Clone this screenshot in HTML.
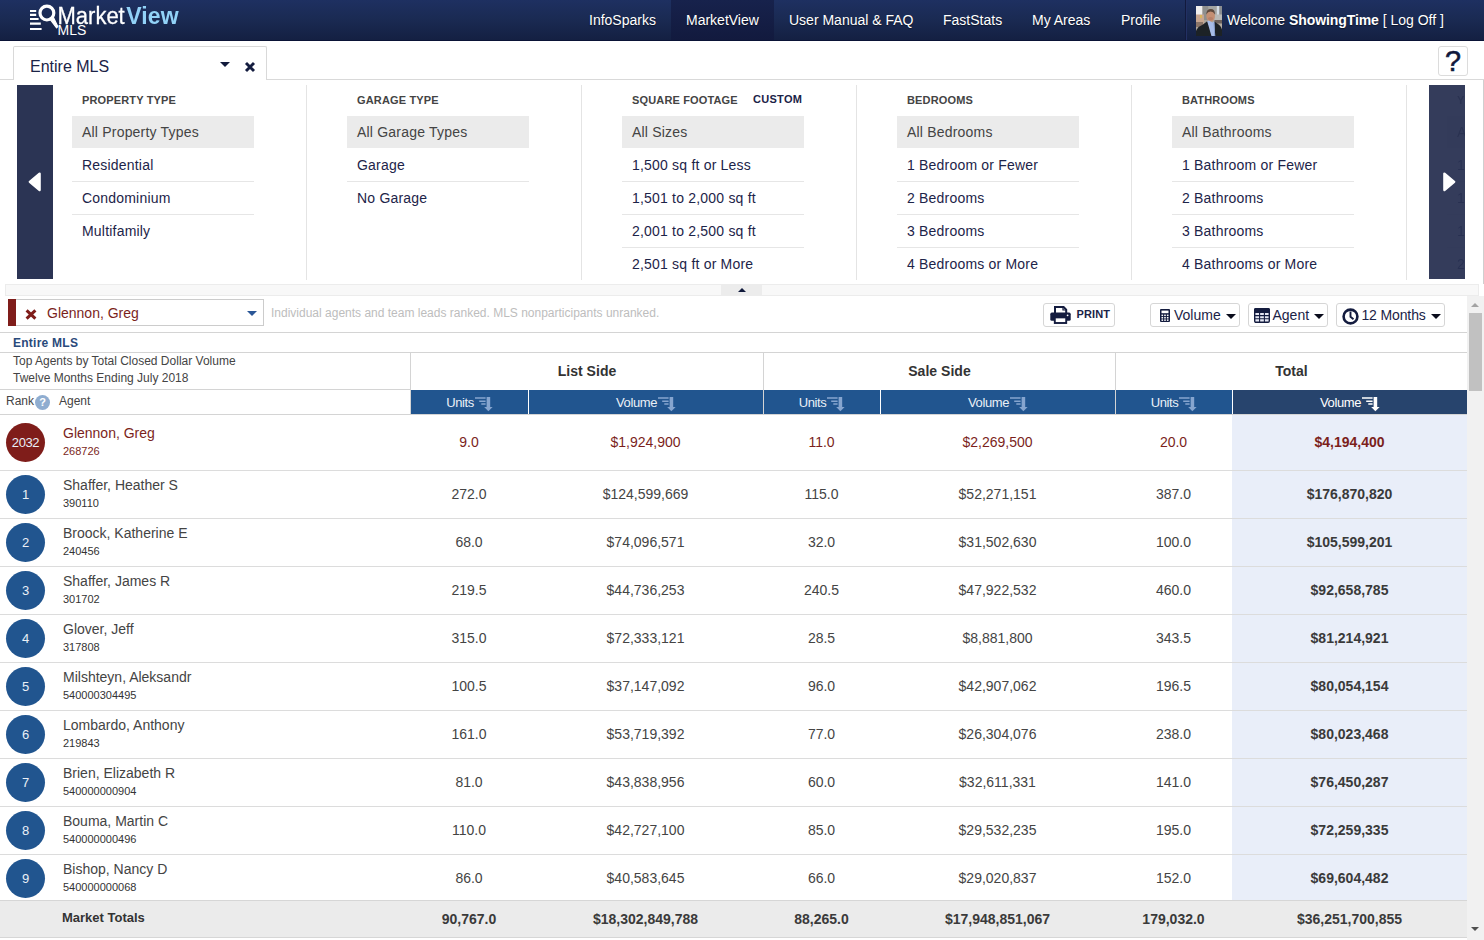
<!DOCTYPE html>
<html lang="en"><head><meta charset="utf-8"><title>MarketView MLS</title>
<style>
*{box-sizing:border-box;margin:0;padding:0}
html,body{width:1484px;height:940px;overflow:hidden;background:#fff}
body{position:relative;font-family:"Liberation Sans",Arial,sans-serif;color:#333;font-size:14px}
/* NAV */
#nav{position:absolute;left:0;top:0;width:1484px;height:41px;background:linear-gradient(#1e3061 0%,#1a2a52 50%,#142042 100%);border-bottom:1px solid #0a1336}
#nav .it{position:absolute;top:0;height:40px;line-height:40px;color:#fff;font-size:14px;white-space:nowrap;text-shadow:0 1px 1px rgba(0,0,0,.5)}
#nav .act{position:absolute;left:671px;top:0;width:103px;height:40px;background:linear-gradient(#17224c,#121a3e)}
#nav .ndiv{position:absolute;left:1185px;top:0;width:2px;height:40px;border-left:1px solid #121a3d;border-right:1px solid #223063}
#logo{position:absolute;left:0;top:0}
#logo .mk{position:absolute;left:57.5px;top:-0.4px;font-size:22px;line-height:30px;color:#fff;letter-spacing:0;white-space:nowrap;transform:scaleY(1.05);transform-origin:0 0;-webkit-text-stroke:.25px #fff}
#logo .mk b{-webkit-text-stroke:0;color:#92d2f7;font-weight:bold;letter-spacing:.1px;font-size:23px;margin-left:1.5px}
#logo .mls{position:absolute;left:57.5px;top:20.6px;font-size:14px;line-height:18px;color:#fff;white-space:nowrap}
#avatar{position:absolute;left:1196px;top:6px;width:26px;height:30px}
/* TAB BAR */
#tabbar{position:absolute;left:0;top:41px;width:1484px;height:44px}
#tabline{position:absolute;left:0;top:38px;width:1484px;height:1px;background:#d9d9d9}
#tab{position:absolute;left:13px;top:5px;width:254px;height:34px;border:1px solid #d9d9d9;border-bottom:none;background:#fff;border-radius:2px 2px 0 0}
#tab .tabname{position:absolute;left:16px;top:8px;font-size:16px;line-height:24px;color:#1b2347}
#tab .tabcaret{position:absolute;left:206px;top:15px;width:0;height:0;border-left:5px solid transparent;border-right:5px solid transparent;border-top:5px solid #111a3c}
#tab .tabx{position:absolute;left:230.4px;top:13.6px}
#help{position:absolute;left:1438px;top:5px;width:30px;height:30px;border:1px solid #dcdcdc;border-radius:3px;text-align:center;font-size:28.8px;line-height:28px;color:#10183c;-webkit-text-stroke:.55px #10183c;background:#fff}
/* FILTERS */
#filters{position:absolute;left:0;top:80px;width:1484px;height:204px;overflow:hidden}
#fright{position:absolute;left:1483px;top:0;width:1px;height:204px;background:#cfcfcf}
.arrowbox{position:absolute;top:5px;width:36px;height:194px}
#arrL{left:17px;background:#2b3454}
#arrR{left:1429px;background:rgba(39,48,81,.94)}
.fcol{position:absolute;top:0;width:182px}
.fhead{height:36px;padding:14px 0 0 10px;font-size:11px;line-height:12px;font-weight:bold;color:#444;letter-spacing:.15px;white-space:nowrap;position:relative}
.fhead .custom{position:absolute;left:131px;top:13px;color:#1b2347;letter-spacing:.3px}
.fitem{height:33px;line-height:32px;padding-left:10px;font-size:14px;color:#1d2449;border-top:1px solid #e6e6e6;white-space:nowrap;letter-spacing:.2px}
.fitem.sel{background:#ebebeb;color:#444;border-top:none;height:32px;line-height:32px}
.fitem.nb{border-top:none;padding-top:1px}
.fdiv{position:absolute;top:5px;width:1px;height:195px;background:#e4e4e4}
.ghost{opacity:.9}
/* collapse */
#collapse{position:absolute;left:5px;top:284px;width:1474px;height:12px;background:#f8f8f8;border:1px solid #ececec}
#chandle{position:absolute;left:715px;top:0;width:41px;height:10px;background:#ececec}
#chandle span{position:absolute;left:17px;top:3px;width:0;height:0;border-left:4.5px solid transparent;border-right:4.5px solid transparent;border-bottom:4.5px solid #111a3c}
/* toolbar */
#agentsel{position:absolute;left:8px;top:299px;width:256px;height:27px;border:1px solid #ccc;border-left:none;padding-left:8px;background:#fff}
#agentsel .bar{position:absolute;left:0;top:-1px;width:8px;height:27px;background:#7f1d1a}
#agentsel .x{position:absolute;left:17px;top:9px}
#agentsel .nm{position:absolute;left:39px;top:0;font-size:14px;line-height:26px;color:#7b1f1c}
#agentsel .car{position:absolute;left:238.5px;top:11px;width:0;height:0;border-left:5px solid transparent;border-right:5px solid transparent;border-top:5px solid #2b5797}
#hint{position:absolute;left:271px;top:306px;font-size:12px;line-height:15px;color:#bdbdbd;white-space:nowrap}
.btn{position:absolute;top:303px;height:24px;border:1px solid #d6d6d6;border-radius:3px;background:#fff;color:#1b2347;font-size:14px;line-height:22px;white-space:nowrap}
.btn .lab{position:absolute;top:0}
.btn .car{position:absolute;top:10px;width:0;height:0;border-left:5px solid transparent;border-right:5px solid transparent;border-top:5px solid #0a0c1c}
.btn svg{position:absolute}
#bprint .lab{font-size:11px;font-weight:bold;letter-spacing:.12px;color:#1b2347}
/* table head */
.hl{position:absolute;left:0;width:1467px;height:1px;background:#d4d4d4}
.vl{position:absolute;top:352px;width:1px;height:62px;background:#d4d4d4}
#t1{position:absolute;left:13px;top:336px;font-size:12px;line-height:15px;font-weight:bold;color:#2a4a7b;letter-spacing:.25px}
#t2,#t3{position:absolute;left:13px;font-size:12px;line-height:15px;color:#444;white-space:nowrap}
#t2{top:354px}#t3{top:371px}
#rk{position:absolute;left:6px;top:394px;font-size:12px;line-height:15px;color:#444}
#rq{position:absolute;left:35px;top:395px;width:15px;height:15px;border-radius:50%;background:#8fadd0;color:#fff;font-size:11px;font-weight:bold;line-height:15px;text-align:center}
#ag{position:absolute;left:59px;top:394px;font-size:12px;line-height:15px;color:#444}
.grp{position:absolute;top:353px;height:36px;line-height:36px;text-align:center;font-weight:bold;font-size:14px;color:#333;letter-spacing:.03px}
.ch{position:absolute;top:390px;height:24px;padding-top:1px;background:#21558f;color:#eaf0f7;font-size:13px;line-height:24px;text-align:center;letter-spacing:-.4px;white-space:nowrap}
.ch span{vertical-align:top}
.ch .si{color:#86a5cf;vertical-align:top;margin-top:6px;margin-left:1px}
.ch.act{background:#27446d;color:#fff}
.ch.act .si{color:#fff}
/* rows */
#rows{position:absolute;left:0;top:0;width:1467px;height:900px;overflow:hidden}
#hicol{position:absolute;left:1232px;top:415px;width:235px;height:500px;background:#e9eef9}
.row{position:absolute;left:0;width:1467px;border-bottom:1px solid #dcdcdc;box-sizing:content-box}
.circ{position:absolute;left:6px;top:4px;width:39px;height:39px;border-radius:50%;background:#21558f;color:#eaf0f7;font-size:13px;line-height:39px;text-align:center;letter-spacing:-.4px}
.row.me .circ{top:8px;background:#7f1d1a}
.nm{position:absolute;left:63px;top:5px;font-size:14px;line-height:18px;color:#444;white-space:nowrap}
.id{position:absolute;left:63px;top:25px;font-size:11px;line-height:14px;color:#333;white-space:nowrap}
.row.me .nm{top:9px;color:#7b1f1c}.row.me .id{top:29px;color:#7b1f1c}
.c{position:absolute;top:0;height:100%;text-align:center;font-size:14px;color:#444;white-space:nowrap;display:flex;align-items:center;justify-content:center;padding-bottom:2px;padding-right:1px}
.row.me .c{color:#7b1f1c}
.c.tv{font-weight:bold;font-size:14px;color:#3a3a3a}
.row.me .c.tv{color:#7b1f1c}
/* totals */
#totals{position:absolute;left:0;top:900px;width:1467px;height:38px;background:#ebebeb;border-top:1px solid #d6d6d6;border-bottom:1px solid #d6d6d6}
#totals .mt{position:absolute;left:62px;top:9px;font-size:13px;font-weight:bold;line-height:16px;color:#333}
#totals .c{font-weight:bold;font-size:14px;color:#3a3a3a;padding-top:0;padding-bottom:1px}
/* scrollbar */
#sb{position:absolute;left:1467px;top:296px;width:17px;height:644px;background:#f1f1f1}
#sb .sbt{position:absolute;left:2px;top:17px;width:13px;height:78px;background:#c1c1c1}
#sb .sbu{position:absolute;left:4px;top:7px;width:0;height:0;border-left:4px solid transparent;border-right:4px solid transparent;border-bottom:4px solid #a3a3a3}
#sb .sbd{position:absolute;left:4px;top:631px;width:0;height:0;border-left:4px solid transparent;border-right:4px solid transparent;border-top:4px solid #505050}
#gclip{position:absolute;left:1429px;top:0;width:36px;height:204px;overflow:hidden}

</style></head>
<body>
<div id="nav">
<div id="logo">
<svg width="60" height="41" viewBox="0 0 60 41" style="position:absolute;left:0;top:0">
<g stroke="#fff" stroke-width="2.2" fill="none">
<path d="M30 11h6.2M30 14.8h6.2M30 19h8.6M30 23.7h10.8M30 29h11.6"/>
</g>
<circle cx="46.9" cy="13.1" r="6.9" stroke="#fff" stroke-width="3.2" fill="none"/>
<path d="M49.6 18.6 L53 16.4 L57.8 26.6 L56.6 27.8 Z" fill="#fff" stroke="#fff" stroke-width="1.2" stroke-linejoin="round"/>
</svg>
<div class="mk">Market<b>View</b></div>
<div class="mls">MLS</div>
</div>
<div class="act"></div>
<div class="it" style="left:589px">InfoSparks</div>
<div class="it" style="left:686px">MarketView</div>
<div class="it" style="left:789px">User Manual &amp; FAQ</div>
<div class="it" style="left:943px">FastStats</div>
<div class="it" style="left:1032px">My Areas</div>
<div class="it" style="left:1121px">Profile</div>
<div class="ndiv"></div>
<svg id="avatar" width="26" height="30" viewBox="0 0 26 30">
<defs><filter id="bl" x="-5%" y="-5%" width="110%" height="110%"><feGaussianBlur stdDeviation="0.55"/></filter><clipPath id="ac"><rect width="26" height="30"/></clipPath></defs>
<g clip-path="url(#ac)"><g filter="url(#bl)">
<rect x="-2" y="-2" width="30" height="34" fill="#aaa49b"/>
<rect x="-2" y="-2" width="8.5" height="11" fill="#f1efee"/>
<rect x="6.5" y="-2" width="6" height="16" fill="#8f8f8d"/>
<rect x="12.5" y="-2" width="8" height="10" fill="#a3a4a2"/>
<rect x="20.8" y="-2" width="2.6" height="12" fill="#d3dde6"/>
<rect x="23.4" y="-2" width="4" height="12" fill="#8a8d90"/>
<rect x="-2" y="8.5" width="10" height="9" fill="#c7a690"/>
<rect x="4" y="9" width="2" height="3" fill="#d8b45a"/>
<rect x="-2" y="16" width="9" height="5" fill="#8a7468"/>
<rect x="18.5" y="8.5" width="9" height="6" fill="#b9b9b6"/>
<rect x="18.5" y="14" width="9" height="4" fill="#6d625c"/>
<rect x="20" y="17.5" width="8" height="8" fill="#b4ada2"/>
<ellipse cx="14.6" cy="10" rx="4.3" ry="5.7" fill="#c48f73"/>
<ellipse cx="14.6" cy="12.6" rx="2.6" ry="1.6" fill="#b77f68"/>
<path d="M10.2 8.4 Q10.6 3 14.8 3 Q19 3 19 8.4 Q17.4 5.4 14.6 5.4 Q11.8 5.4 10.2 8.4Z" fill="#5e4a3e"/>
<path d="M-2 32 L0.4 24 Q2.5 20 7 18.4 L11.2 15.2 L15.4 23 L18.3 15.6 L23 18.8 Q25.6 20.6 26.6 26 L28 32Z" fill="#1d2026"/>
<path d="M11.2 15.2 L12.8 14.4 L16.4 16.4 L18.3 15.6 L19.4 32 L16 32 Z" fill="#a7bde8"/>
<path d="M17.6 17 L18.3 15.6 L19.2 32 L18.4 32Z" fill="#8099c8"/>
</g></g>
</svg>
<div class="it" style="left:1227px">Welcome <b style="letter-spacing:-.09px">ShowingTime</b> [ Log Off ]</div>
</div>
<div id="tabbar">
<div id="tabline"></div>
<div id="tab"><span class="tabname">Entire MLS</span><span class="tabcaret"></span><svg class="tabx" width="12" height="12" viewBox="0 0 12 12"><path d="M2 2 L10 10 M10 2 L2 10" stroke="#141c3f" stroke-width="2.9" stroke-linecap="butt" fill="none"/></svg></div>
<div id="help">?</div>
</div>
<div id="filters">
<div id="fright"></div>
<div class="arrowbox" id="arrL"><svg width="36" height="194" viewBox="0 0 36 194"><path d="M22.6 88.6 L12.8 96.8 L22.6 105 Z" fill="#fff" stroke="#fff" stroke-width="2.4" stroke-linejoin="round"/></svg></div>
<div class="fcol" style="left:72px"><div class="fhead">PROPERTY TYPE</div><div class="fitem sel">All Property Types</div><div class="fitem nb">Residential</div><div class="fitem">Condominium</div><div class="fitem">Multifamily</div></div>
<div class="fdiv" style="left:306px"></div>
<div class="fcol" style="left:347px"><div class="fhead">GARAGE TYPE</div><div class="fitem sel">All Garage Types</div><div class="fitem nb">Garage</div><div class="fitem">No Garage</div></div>
<div class="fdiv" style="left:581px"></div>
<div class="fcol" style="left:622px"><div class="fhead">SQUARE FOOTAGE<span class="custom">CUSTOM</span></div><div class="fitem sel">All Sizes</div><div class="fitem nb">1,500 sq ft or Less</div><div class="fitem">1,501 to 2,000 sq ft</div><div class="fitem">2,001 to 2,500 sq ft</div><div class="fitem">2,501 sq ft or More</div></div>
<div class="fdiv" style="left:856px"></div>
<div class="fcol" style="left:897px"><div class="fhead">BEDROOMS</div><div class="fitem sel">All Bedrooms</div><div class="fitem nb">1 Bedroom or Fewer</div><div class="fitem">2 Bedrooms</div><div class="fitem">3 Bedrooms</div><div class="fitem">4 Bedrooms or More</div></div>
<div class="fdiv" style="left:1131px"></div>
<div class="fcol" style="left:1172px"><div class="fhead">BATHROOMS</div><div class="fitem sel">All Bathrooms</div><div class="fitem nb">1 Bathroom or Fewer</div><div class="fitem">2 Bathrooms</div><div class="fitem">3 Bathrooms</div><div class="fitem">4 Bathrooms or More</div></div>
<div class="fdiv" style="left:1406px"></div>
<div id="gclip"><div class="fcol ghost" style="left:18px"><div class="fhead">YEAR BUILT</div><div class="fitem sel">All Years</div><div class="fitem nb">1900 or Earlier</div><div class="fitem">1901 to 1950</div><div class="fitem">1951 to 2000</div><div class="fitem">2001 or Later</div></div></div>
<div class="arrowbox" id="arrR"><svg width="36" height="194" viewBox="0 0 36 194"><path d="M15.4 88.6 L25.2 96.8 L15.4 105 Z" fill="#fff" stroke="#fff" stroke-width="2.4" stroke-linejoin="round"/></svg></div>
</div>
<div id="collapse"><div id="chandle"><span></span></div></div>
<div id="agentsel"><div class="bar"></div><svg class="x" width="12" height="11" viewBox="0 0 12 11"><path d="M1.6 1.3 L10.4 9.7 M10.4 1.3 L1.6 9.7" stroke="#7f1d1a" stroke-width="3" fill="none"/></svg><span class="nm">Glennon, Greg</span><span class="car"></span></div>
<div id="hint">Individual agents and team leads ranked. MLS nonparticipants unranked.</div>
<div class="btn" id="bprint" style="left:1043px;width:72px">
<svg width="21" height="18" viewBox="0 0 21 18" style="left:6px;top:1.5px"><path d="M5 7.5V1h8.6l2.6 2.6v3.9" fill="none" stroke="#141c3f" stroke-width="2"/><path d="M13 1v3h3" fill="none" stroke="#141c3f" stroke-width="1.2"/><rect x="0.3" y="6.6" width="20.4" height="8.2" rx="1.6" fill="#141c3f"/><rect x="4.8" y="11.4" width="11.4" height="5.6" fill="#fff" stroke="#141c3f" stroke-width="1.9"/><circle cx="17.6" cy="9.3" r=".9" fill="#fff"/></svg>
<span class="lab" style="left:32.5px;top:-1px">PRINT</span></div>
<div class="btn" style="left:1150px;width:90px">
<svg width="10" height="13" viewBox="0 0 10 13" style="left:8.5px;top:5.3px"><rect width="10" height="13" rx="1" fill="#141c3f"/><rect x="1.5" y="1.6" width="7" height="2.6" fill="#fff"/><g fill="#fff"><rect x="1.5" y="5.6" width="1.6" height="1.5"/><rect x="4.2" y="5.6" width="1.6" height="1.5"/><rect x="6.9" y="5.6" width="1.6" height="1.5"/><rect x="1.5" y="8" width="1.6" height="1.5"/><rect x="4.2" y="8" width="1.6" height="1.5"/><rect x="6.9" y="8" width="1.6" height="1.5"/><rect x="1.5" y="10.4" width="1.6" height="1.5"/><rect x="4.2" y="10.4" width="1.6" height="1.5"/><rect x="6.9" y="10.4" width="1.6" height="1.5"/></g></svg>
<span class="lab" style="left:23px">Volume</span><span class="car" style="left:75px"></span></div>
<div class="btn" style="left:1248px;width:80px">
<svg width="16" height="15" viewBox="0 0 16 15" style="left:5px;top:4px"><rect x=".7" y=".7" width="14.6" height="13.6" rx="1.2" fill="#e6e8f4" stroke="#141c3f" stroke-width="1.4"/><path d="M.7 4.2V1.9Q.7.7 1.9.7h12.2q1.2 0 1.2 1.2v2.3z" fill="#141c3f" stroke="#141c3f" stroke-width="1.4"/><path d="M.7 7.6h14.6M.7 10.8h14.6M5.6 4v10.3M10.4 4v10.3" stroke="#141c3f" stroke-width="1.1"/></svg>
<span class="lab" style="left:23.5px">Agent</span><span class="car" style="left:65px"></span></div>
<div class="btn" style="left:1336px;width:109px">
<svg width="17" height="17" viewBox="0 0 17 17" style="left:4.6px;top:3.6px"><circle cx="8.5" cy="8.5" r="6.9" fill="#fff" stroke="#141c3f" stroke-width="2.6"/><path d="M8.5 3.6V8.8l3 2.4" fill="none" stroke="#141c3f" stroke-width="1.9"/></svg>
<span class="lab" style="left:24.4px;letter-spacing:-.12px">12 Months</span><span class="car" style="left:94px"></span></div>
<div id="thead">
<div class="hl" style="top:332px"></div>
<div id="t1">Entire MLS</div>
<div class="hl" style="top:352px"></div>
<div id="t2">Top Agents by Total Closed Dollar Volume</div>
<div id="t3">Twelve Months Ending July 2018</div>
<div class="hl" style="top:389px;width:411px"></div>
<div id="rk">Rank</div><div id="rq">?</div><div id="ag">Agent</div>
<div class="vl" style="left:410px"></div><div class="vl" style="left:763px"></div><div class="vl" style="left:1115px"></div>
<div class="grp" style="left:411px;width:352px">List Side</div>
<div class="grp" style="left:764px;width:351px">Sale Side</div>
<div class="grp" style="left:1116px;width:351px">Total</div>
<div class="ch" style="left:411px;width:117px"><span>Units</span><svg class="si" width="18" height="15" viewBox="0 0 18 15"><path d="M0 1h10.6M4.2 4.2h6.4M6.3 7h4.3" stroke="currentColor" stroke-width="1.6" fill="none"/><path d="M13.4 0v10.4" stroke="currentColor" stroke-width="3.6" fill="none"/><path d="M9.2 9.9h8.4l-4.2 4.3z" fill="currentColor"/></svg></div>
<div class="ch" style="left:529px;width:234px"><span>Volume</span><svg class="si" width="18" height="15" viewBox="0 0 18 15"><path d="M0 1h10.6M4.2 4.2h6.4M6.3 7h4.3" stroke="currentColor" stroke-width="1.6" fill="none"/><path d="M13.4 0v10.4" stroke="currentColor" stroke-width="3.6" fill="none"/><path d="M9.2 9.9h8.4l-4.2 4.3z" fill="currentColor"/></svg></div>
<div class="ch" style="left:764px;width:116px"><span>Units</span><svg class="si" width="18" height="15" viewBox="0 0 18 15"><path d="M0 1h10.6M4.2 4.2h6.4M6.3 7h4.3" stroke="currentColor" stroke-width="1.6" fill="none"/><path d="M13.4 0v10.4" stroke="currentColor" stroke-width="3.6" fill="none"/><path d="M9.2 9.9h8.4l-4.2 4.3z" fill="currentColor"/></svg></div>
<div class="ch" style="left:881px;width:234px"><span>Volume</span><svg class="si" width="18" height="15" viewBox="0 0 18 15"><path d="M0 1h10.6M4.2 4.2h6.4M6.3 7h4.3" stroke="currentColor" stroke-width="1.6" fill="none"/><path d="M13.4 0v10.4" stroke="currentColor" stroke-width="3.6" fill="none"/><path d="M9.2 9.9h8.4l-4.2 4.3z" fill="currentColor"/></svg></div>
<div class="ch" style="left:1116px;width:116px"><span>Units</span><svg class="si" width="18" height="15" viewBox="0 0 18 15"><path d="M0 1h10.6M4.2 4.2h6.4M6.3 7h4.3" stroke="currentColor" stroke-width="1.6" fill="none"/><path d="M13.4 0v10.4" stroke="currentColor" stroke-width="3.6" fill="none"/><path d="M9.2 9.9h8.4l-4.2 4.3z" fill="currentColor"/></svg></div>
<div class="ch act" style="left:1233px;width:234px"><span>Volume</span><svg class="si" width="18" height="15" viewBox="0 0 18 15"><path d="M0 1h10.6M4.2 4.2h6.4M6.3 7h4.3" stroke="currentColor" stroke-width="1.6" fill="none"/><path d="M13.4 0v10.4" stroke="currentColor" stroke-width="3.6" fill="none"/><path d="M9.2 9.9h8.4l-4.2 4.3z" fill="currentColor"/></svg></div>
<div class="hl" style="top:414px"></div>
</div>
<div id="rows">
<div id="hicol"></div>
<div class="row me" style="top:415px;height:55px"><div class="circ">2032</div><div class="nm">Glennon, Greg</div><div class="id">268726</div><div class="c" style="left:411px;width:117px">9.0</div><div class="c" style="left:529px;width:234px">$1,924,900</div><div class="c" style="left:764px;width:116px">11.0</div><div class="c" style="left:881px;width:234px">$2,269,500</div><div class="c" style="left:1116px;width:116px">20.0</div><div class="c tv" style="left:1233px;width:234px">$4,194,400</div></div>
<div class="row" style="top:471px;height:47px"><div class="circ">1</div><div class="nm">Shaffer, Heather S</div><div class="id">390110</div><div class="c" style="left:411px;width:117px">272.0</div><div class="c" style="left:529px;width:234px">$124,599,669</div><div class="c" style="left:764px;width:116px">115.0</div><div class="c" style="left:881px;width:234px">$52,271,151</div><div class="c" style="left:1116px;width:116px">387.0</div><div class="c tv" style="left:1233px;width:234px">$176,870,820</div></div>
<div class="row" style="top:519px;height:47px"><div class="circ">2</div><div class="nm">Broock, Katherine E</div><div class="id">240456</div><div class="c" style="left:411px;width:117px">68.0</div><div class="c" style="left:529px;width:234px">$74,096,571</div><div class="c" style="left:764px;width:116px">32.0</div><div class="c" style="left:881px;width:234px">$31,502,630</div><div class="c" style="left:1116px;width:116px">100.0</div><div class="c tv" style="left:1233px;width:234px">$105,599,201</div></div>
<div class="row" style="top:567px;height:47px"><div class="circ">3</div><div class="nm">Shaffer, James R</div><div class="id">301702</div><div class="c" style="left:411px;width:117px">219.5</div><div class="c" style="left:529px;width:234px">$44,736,253</div><div class="c" style="left:764px;width:116px">240.5</div><div class="c" style="left:881px;width:234px">$47,922,532</div><div class="c" style="left:1116px;width:116px">460.0</div><div class="c tv" style="left:1233px;width:234px">$92,658,785</div></div>
<div class="row" style="top:615px;height:47px"><div class="circ">4</div><div class="nm">Glover, Jeff</div><div class="id">317808</div><div class="c" style="left:411px;width:117px">315.0</div><div class="c" style="left:529px;width:234px">$72,333,121</div><div class="c" style="left:764px;width:116px">28.5</div><div class="c" style="left:881px;width:234px">$8,881,800</div><div class="c" style="left:1116px;width:116px">343.5</div><div class="c tv" style="left:1233px;width:234px">$81,214,921</div></div>
<div class="row" style="top:663px;height:47px"><div class="circ">5</div><div class="nm">Milshteyn, Aleksandr</div><div class="id">540000304495</div><div class="c" style="left:411px;width:117px">100.5</div><div class="c" style="left:529px;width:234px">$37,147,092</div><div class="c" style="left:764px;width:116px">96.0</div><div class="c" style="left:881px;width:234px">$42,907,062</div><div class="c" style="left:1116px;width:116px">196.5</div><div class="c tv" style="left:1233px;width:234px">$80,054,154</div></div>
<div class="row" style="top:711px;height:47px"><div class="circ">6</div><div class="nm">Lombardo, Anthony</div><div class="id">219843</div><div class="c" style="left:411px;width:117px">161.0</div><div class="c" style="left:529px;width:234px">$53,719,392</div><div class="c" style="left:764px;width:116px">77.0</div><div class="c" style="left:881px;width:234px">$26,304,076</div><div class="c" style="left:1116px;width:116px">238.0</div><div class="c tv" style="left:1233px;width:234px">$80,023,468</div></div>
<div class="row" style="top:759px;height:47px"><div class="circ">7</div><div class="nm">Brien, Elizabeth R</div><div class="id">540000000904</div><div class="c" style="left:411px;width:117px">81.0</div><div class="c" style="left:529px;width:234px">$43,838,956</div><div class="c" style="left:764px;width:116px">60.0</div><div class="c" style="left:881px;width:234px">$32,611,331</div><div class="c" style="left:1116px;width:116px">141.0</div><div class="c tv" style="left:1233px;width:234px">$76,450,287</div></div>
<div class="row" style="top:807px;height:47px"><div class="circ">8</div><div class="nm">Bouma, Martin C</div><div class="id">540000000496</div><div class="c" style="left:411px;width:117px">110.0</div><div class="c" style="left:529px;width:234px">$42,727,100</div><div class="c" style="left:764px;width:116px">85.0</div><div class="c" style="left:881px;width:234px">$29,532,235</div><div class="c" style="left:1116px;width:116px">195.0</div><div class="c tv" style="left:1233px;width:234px">$72,259,335</div></div>
<div class="row" style="top:855px;height:47px"><div class="circ">9</div><div class="nm">Bishop, Nancy D</div><div class="id">540000000068</div><div class="c" style="left:411px;width:117px">86.0</div><div class="c" style="left:529px;width:234px">$40,583,645</div><div class="c" style="left:764px;width:116px">66.0</div><div class="c" style="left:881px;width:234px">$29,020,837</div><div class="c" style="left:1116px;width:116px">152.0</div><div class="c tv" style="left:1233px;width:234px">$69,604,482</div></div>
</div>
<div id="totals"><div class="mt">Market Totals</div><div class="c" style="left:411px;width:117px">90,767.0</div><div class="c" style="left:529px;width:234px">$18,302,849,788</div><div class="c" style="left:764px;width:116px">88,265.0</div><div class="c" style="left:881px;width:234px">$17,948,851,067</div><div class="c" style="left:1116px;width:116px">179,032.0</div><div class="c" style="left:1233px;width:234px">$36,251,700,855</div></div>
<div id="sb"><div class="sbu"></div><div class="sbt"></div><div class="sbd"></div></div>
</body></html>
